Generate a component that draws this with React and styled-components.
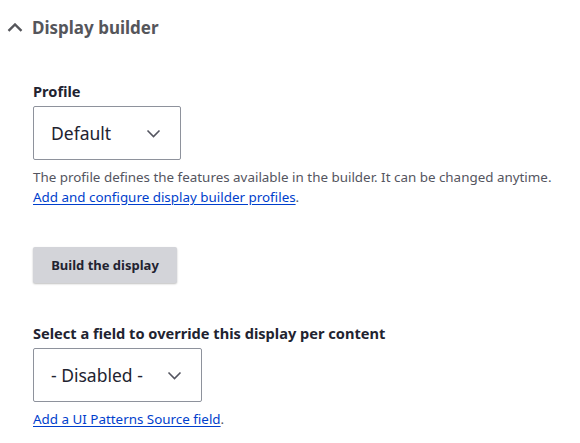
import React from 'react';
import styled, { createGlobalStyle } from 'styled-components';

const GlobalStyle = createGlobalStyle`
  body {
    margin: 0;
    background: #fff;
    font-family: "Noto Sans", "Open Sans", sans-serif;
    color: #222330;
  }
`;

const Details = styled.div`
  padding: 0;
`;

const Summary = styled.div`
  display: flex;
  align-items: center;
  gap: 9px;
  height: 54px;
  padding-left: 7px;
  font-size: 17px;
  font-weight: 700;
  color: #55565b;
`;

const Body = styled.div`
  padding: 27px 0 0 33px;
  display: flex;
  flex-direction: column;
  align-items: flex-start;
`;

const Label = styled.div`
  font-size: 14.6px;
  font-weight: 700;
  line-height: 20px;
  color: #222330;
  margin-bottom: 5px;
`;

const Select = styled.div`
  box-sizing: border-box;
  display: flex;
  align-items: center;
  justify-content: space-between;
  height: 54px;
  width: ${(p) => p.$width}px;
  padding: 0 19px 0 17px;
  border: 1px solid #8e929c;
  border-radius: 2px;
  font-size: 17.5px;
  color: #222330;
`;

const Description = styled.div`
  margin-top: 7px;
  font-size: 13.4px;
  line-height: 20px;
  color: #545560;
`;

const Link = styled.a`
  color: #003ecc;
  text-decoration: underline;
  text-underline-offset: 2px;
`;

const Button = styled.button`
  margin-top: 40px;
  box-sizing: border-box;
  width: 144px;
  height: 36px;
  padding: 0;
  border: 0;
  border-radius: 2px;
  background: #d3d4d9;
  box-shadow: 0 1px 2px rgba(0, 0, 0, 0.25);
  font-family: inherit;
  font-size: 13px;
  font-weight: 700;
  color: #222330;
`;

const FieldGroup = styled.div`
  margin-top: ${(p) => p.$top}px;
  display: flex;
  flex-direction: column;
  align-items: flex-start;
`;

const Chevron = ({ up }) => (
  <svg width={up ? 16 : 15} height="9" viewBox={up ? '0 0 16 9' : '0 0 15 9'} fill="none">
    <path
      d={up ? 'M1.5 7.8L8 1.5L14.5 7.8' : 'M1.5 1.5L7.5 7.5L13.5 1.5'}
      stroke={up ? '#55565b' : '#545560'}
      strokeWidth={up ? 2.4 : 1.6}
    />
  </svg>
);

export default function App() {
  return (
    <>
      <GlobalStyle />
      <Details>
        <Summary>
          <Chevron up />
          <span>Display builder</span>
        </Summary>
        <Body>
          <FieldGroup $top={0}>
            <Label>Profile</Label>
            <Select $width={148}>
              <span>Default</span>
              <Chevron />
            </Select>
            <Description>
              The profile defines the features available in the builder. It can be changed anytime.
              <br />
              <Link href="#">Add and configure display builder profiles</Link>.
            </Description>
          </FieldGroup>
          <Button>Build the display</Button>
          <FieldGroup $top={40}>
            <Label>Select a field to override this display per content</Label>
            <Select $width={169}>
              <span>- Disabled -</span>
              <Chevron />
            </Select>
            <Description>
              <Link href="#">Add a UI Patterns Source field</Link>.
            </Description>
          </FieldGroup>
        </Body>
      </Details>
    </>
  );
}
